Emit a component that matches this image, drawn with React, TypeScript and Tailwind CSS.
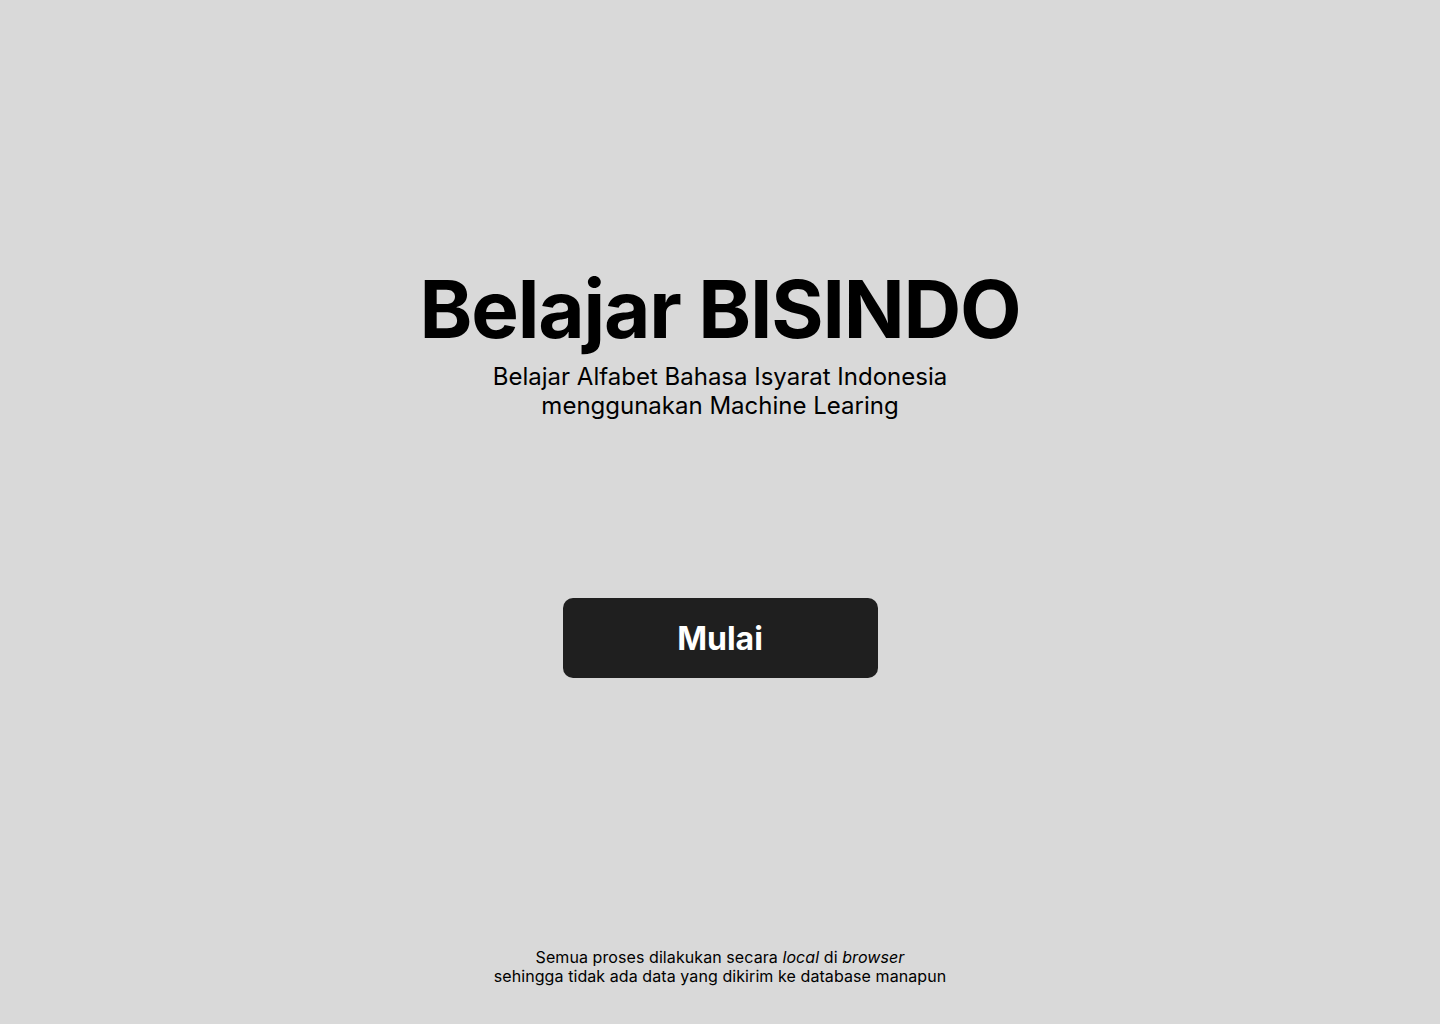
export default function App() {
    return (
        <main className="min-h-screen w-full bg-[#d9d9d9] flex flex-col items-center text-black font-['Inter','Liberation_Sans',sans-serif]">
            <div className="pt-[269px] flex flex-col items-center text-center">
                <h1 className="text-[80px] leading-[80px] font-bold tracking-[-0.015em]">Belajar BISINDO</h1>
                <p className="mt-[13px] text-[24px] leading-[29px] font-normal">
                    Belajar Alfabet Bahasa Isyarat Indonesia
                    <br />
                    menggunakan Machine Learing
                </p>
            </div>

            <button className="mt-[178px] w-[315px] h-[80px] rounded-[10px] bg-[#1f1f1f] text-white text-[32px] font-bold pt-[2px]">
                Mulai
            </button>

            <footer className="mt-auto pb-[38px] text-center text-[16px] leading-[19px] font-normal tracking-[0.005em]">
                <p>
                    Semua proses dilakukan secara <i>local</i> di <i>browser</i>
                </p>
                <p>sehingga tidak ada data yang dikirim ke database manapun</p>
            </footer>
        </main>
    );
}
